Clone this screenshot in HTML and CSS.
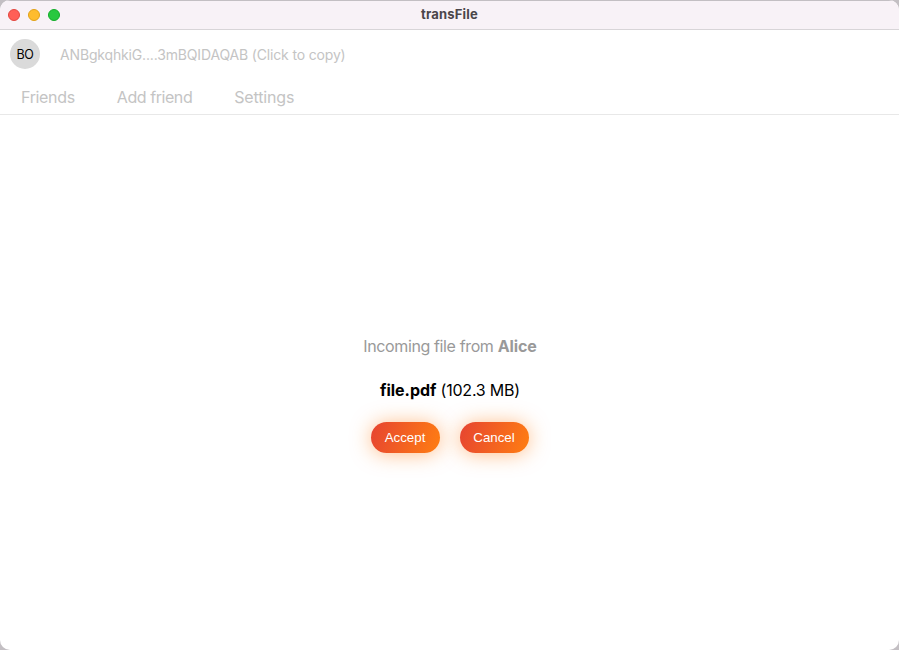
FILE: index.html
```html
<!DOCTYPE html>
<html lang="en">
<head>
<meta charset="utf-8">
<title>transFile</title>
<link rel="stylesheet" href="styles.css">
</head>
<body>
<div class="window">
  <header class="titlebar">
    <div class="lights"><i class="light close"></i><i class="light minimize"></i><i class="light zoom"></i></div>
    <h1 class="title"><span>transFile</span></h1>
  </header>
  <section class="profile">
    <div class="avatar">BO</div>
    <div class="key"><span>ANBgkqhkiG....3mBQIDAQAB (Click to copy)</span></div>
  </section>
  <nav class="tabs">
    <a class="tab friends">Friends</a>
    <a class="tab add">Add friend</a>
    <a class="tab settings">Settings</a>
  </nav>
  <main class="transfer">
    <p class="incoming">Incoming file from <b>Alice</b></p>
    <p class="file"><b>file.pdf</b> (102.3 MB)</p>
    <div class="actions"><button>Accept</button><button>Cancel</button></div>
  </main>
</div>
</body>
</html>
```
FILE: styles.css
```css
* { box-sizing: border-box; }
body { margin: 0; background: #c3bfc3; font-family: Inter, "Liberation Sans", sans-serif; }
.window { display: flex; flex-direction: column; width: 899px; height: 650px; background: #fff; border-radius: 10px; overflow: hidden; }
.titlebar { display: grid; grid-template-columns: 100px 1fr 100px; align-items: center; height: 30px; flex: none; background: #f8f2f7; border-top: 1px solid #c3bfc3; border-bottom: 1px solid #d8d5d8; }
.lights { display: flex; gap: 8px; padding-left: 8px; }
.light { width: 12px; height: 12px; border-radius: 50%; border: 1px solid; }
.close { background: #ff5f57; border-color: #e2463f; }
.minimize { background: #febc2e; border-color: #e1a116; }
.zoom { background: #28c840; border-color: #12ac28; }
.title { margin: 0; padding-bottom: 1px; text-align: center; font-size: 13px; line-height: 17px; font-weight: 700; letter-spacing: .2px; color: #4a464a; }
.profile { display: flex; align-items: flex-start; height: 49px; flex: none; padding: 9px 10px 0; gap: 20px; }
.avatar { display: flex; align-items: center; justify-content: center; width: 30px; height: 30px; border-radius: 50%; background: #dadada; font-size: 12.5px; letter-spacing: -.3px; color: #000; }
.key { font-size: 14px; line-height: 31px; letter-spacing: -.16px; color: #c4c4c4; }
.tabs { display: flex; height: 36px; flex: none; padding: 1px 0 0 21px; border-bottom: 1px solid #e8e8e8; gap: 42px; }
.tab { font-size: 16px; line-height: 34px; letter-spacing: -.34px; color: #c4c4c4; }
.add { letter-spacing: -.43px; }
.settings { letter-spacing: -.16px; }
.transfer { flex: 1; display: flex; flex-direction: column; align-items: center; padding-top: 219px; }
p { margin: 0; font-size: 16px; line-height: 24px; white-space: nowrap; }
.incoming { padding-left: 1px; letter-spacing: -.37px; color: #999; }
.incoming b { letter-spacing: -.1px; }
.file { margin-top: 20px; padding-left: 1px; letter-spacing: -.22px; color: #000; }
.file b { letter-spacing: -.05px; }
.actions { display: flex; gap: 20px; margin-top: 20px; }
button { width: 69px; height: 31px; border: 0; padding: 0; border-radius: 16px; color: #fff; font: 13.33px "Liberation Sans", sans-serif; background: linear-gradient(108deg, #e64431, #ff7e12); box-shadow: 0 1px 20px rgba(255,126,21,.5); }
```
